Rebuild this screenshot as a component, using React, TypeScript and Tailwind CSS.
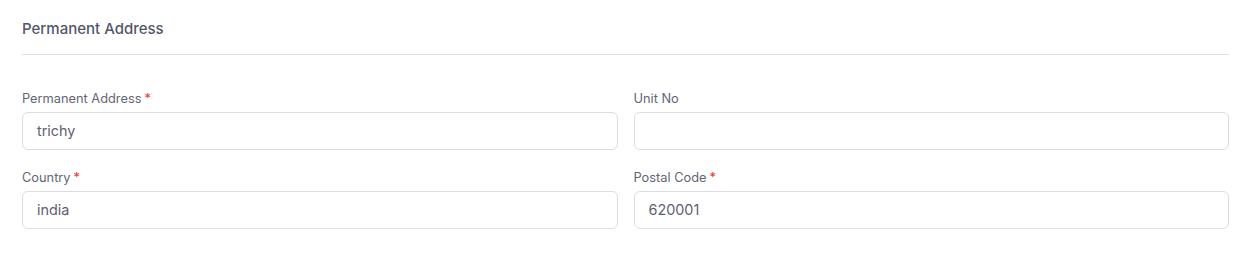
import React from "react";

function Field({ label, value, required }: { label: string; value: string; required?: boolean }) {
  return (
    <div className="flex flex-col">
      <label className="text-[12.8px] leading-4 text-[#636576] mb-[5px]">
        {label}
        {required && <span className="text-[#f0302c] ml-[3px]">*</span>}
      </label>
      <div className="h-[38px] rounded-[6px] border border-[#dcdde1] bg-white flex items-center px-[14px] text-[14.4px] text-[#5f6171]">
        {value}
      </div>
    </div>
  );
}

export default function App() {
  return (
    <div className="w-[1245px] h-[272px] bg-white pl-[22px] pr-[16px]" style={{ fontFamily: "Inter, 'Noto Sans', sans-serif" }}>
      <div className="pt-[19px] pb-[15px] border-b border-[#dfe0e4]">
        <h2 className="text-[15px] leading-5 font-medium text-[#54566a]">Permanent Address</h2>
      </div>
      <div className="mt-[36px] grid grid-cols-2 gap-x-[16px] gap-y-[20px]">
        <Field label="Permanent Address" value="trichy" required />
        <Field label="Unit No" value="" />
        <Field label="Country" value="india" required />
        <Field label="Postal Code" value="620001" required />
      </div>
    </div>
  );
}
